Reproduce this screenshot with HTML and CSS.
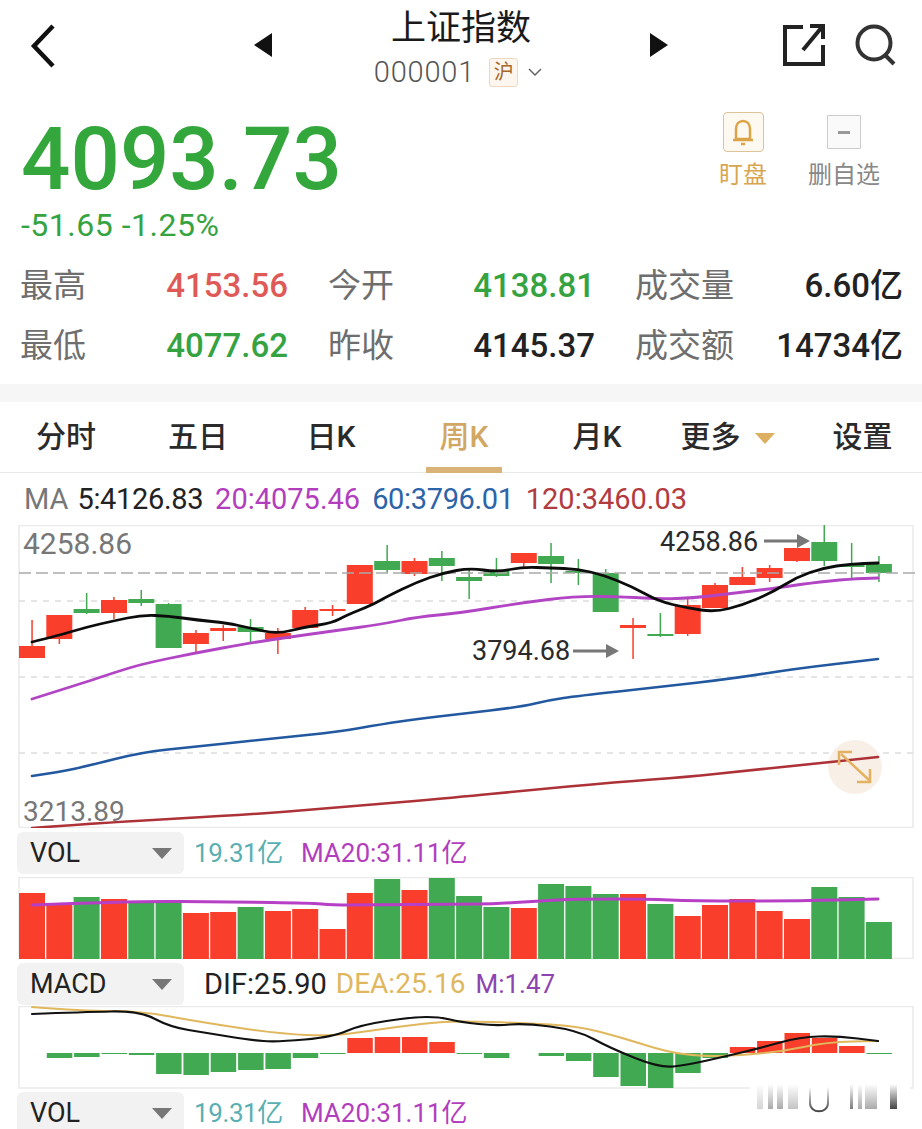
FILE: index.html
```html
<!DOCTYPE html>
<html lang="zh-CN">

<head>
    <meta charset="utf-8">
    <title>上证指数</title>
    <link rel="stylesheet" href="styles.css">
</head>

<body>
    <div class="page">
        <!-- top bar -->
        <header class="topbar">
            <svg class="back" viewBox="0 0 26 44"><polyline points="23,2 4,22 23,42" /></svg>
            <span class="nav-arrow prev"></span>
            <div class="title-block">
                <div class="title">上证指数</div>
                <div class="subtitle">
                    <span class="code">000001</span>
                    <span class="market">沪</span>
                    <svg class="caret" viewBox="0 0 14 8"><polyline points="1,1 7,7 13,1" /></svg>
                </div>
            </div>
            <span class="nav-arrow next"></span>
            <svg class="share" viewBox="0 0 42 42">
                <polyline points="20,3 2,3 2,40 40,40 40,21" />
                <polyline points="27,2 40,2 40,15" />
                <line x1="39" y1="3" x2="20" y2="26" />
            </svg>
            <svg class="search" viewBox="0 0 42 42">
                <circle cx="20" cy="19" r="16.5" />
                <line x1="31" y1="31" x2="40" y2="40" />
            </svg>
        </header>

        <!-- price and quick actions -->
        <section class="quote">
            <div class="price-block">
                <div class="price">4093.73</div>
                <div class="change">-51.65 -1.25%</div>
            </div>
            <div class="quick-actions">
                <div class="action watch">
                    <span class="action-box">
                        <svg viewBox="0 0 24 28">
                            <path d="M5 21V11C5 6 8 3 12 3s7 3 7 8v10z" />
                            <line x1="2" y1="22" x2="22" y2="22" />
                            <line x1="10" y1="26" x2="14" y2="26" />
                        </svg>
                    </span>
                    <span class="action-label">盯盘</span>
                </div>
                <div class="action remove">
                    <span class="action-box"><i class="minus"></i></span>
                    <span class="action-label">删自选</span>
                </div>
            </div>
        </section>

        <section class="stats">
            <div class="stat-row">
                <span class="stat-label">最高</span><span class="stat-value up">4153.56</span>
                <span class="stat-label">今开</span><span class="stat-value down">4138.81</span>
                <span class="stat-label">成交量</span><span class="stat-value">6.60亿</span>
            </div>
            <div class="stat-row">
                <span class="stat-label">最低</span><span class="stat-value down">4077.62</span>
                <span class="stat-label">昨收</span><span class="stat-value">4145.37</span>
                <span class="stat-label">成交额</span><span class="stat-value">14734亿</span>
            </div>
        </section>

        <div class="band"></div>

        <nav class="tabs">
            <a class="tab">分时</a>
            <a class="tab">五日</a>
            <a class="tab">日K</a>
            <a class="tab active">周K</a>
            <a class="tab">月K</a>
            <a class="tab more">更多<i class="more-caret"></i></a>
            <a class="tab">设置</a>
        </nav>

        <div class="ma-legend">
            <span class="muted">MA</span>
            <span class="tight">5:4126.83</span>
            <span class="purple">20:4075.46</span>
            <span class="blue tight">60:3796.01</span>
            <span class="brown">120:3460.03</span>
        </div>

        <!-- the svg view boxes use screen coordinates, so data reads straight off the picture -->
        <svg id="kline" class="chart" viewBox="0 525 922 303">
            <text class="axis-label high" x="23" y="554">4258.86</text>
            <text class="axis-label" x="23" y="821">3213.89</text>
            <text class="mark-label" x="660" y="551">4258.86</text>
            <polyline class="mark-arrow" points="764,541 799,541" />
            <polygon class="mark-head" points="797,534 810,541 797,548" />
            <text class="mark-label" x="472" y="660">3794.68</text>
            <polyline class="mark-arrow" points="573,651 608,651" />
            <polygon class="mark-head" points="606,644 619,651 606,658" />
            <g class="expand">
                <polyline points="839,765 839,752 852,752" />
                <line x1="841" y1="754" x2="869" y2="780" />
                <polyline points="870,769 870,782 857,782" />
            </g>
        </svg>

        <div class="panel-head">
            <div class="select">VOL<i class="select-caret"></i></div>
            <span class="teal legend-a">19.31亿</span>
            <span class="purple legend-b">MA20:31.11亿</span>
        </div>
        <svg id="volume" class="chart" viewBox="0 877 922 82"></svg>

        <div class="panel-head macd-head">
            <div class="select">MACD<i class="select-caret"></i></div>
            <span class="legend-dif">DIF:25.90</span>
            <span class="gold legend-dea">DEA:25.16</span>
            <span class="violet legend-m">M:1.47</span>
        </div>
        <svg id="macd" class="chart" viewBox="0 1006 922 83"></svg>

        <div class="panel-head last-head">
            <div class="select">VOL<i class="select-caret"></i></div>
            <span class="teal legend-a">19.31亿</span>
            <span class="purple legend-b">MA20:31.11亿</span>
        </div>

        <!-- blurred watermark over the bottom corner -->
        <svg class="watermark" viewBox="0 0 160 34">
            <defs>
                <linearGradient id="fade" x1="0" y1="0" x2="0" y2="1">
                    <stop offset="0" stop-color="#fff" />
                    <stop offset="1" stop-color="#aaa" />
                </linearGradient>
                <linearGradient id="fade-dark" x1="0" y1="0" x2="0" y2="1">
                    <stop offset="0" stop-color="#fff" />
                    <stop offset="1" stop-color="#444" />
                </linearGradient>
            </defs>
            <rect x="0" y="0" width="160" height="34" fill="#fff" />
            <rect x="7" y="3" width="6" height="25" fill="url(#fade)" opacity="0.5" />
            <rect x="18" y="3" width="5" height="25" fill="url(#fade)" />
            <rect x="27" y="3" width="6" height="25" fill="url(#fade)" />
            <rect x="38" y="3" width="10" height="25" fill="url(#fade)" opacity="0.7" />
            <path d="M60 6V22C60 33 78 33 78 22V6" fill="none" stroke="url(#fade-dark)" stroke-width="2" />
            <rect x="100" y="3" width="3" height="25" fill="url(#fade-dark)" opacity="0.7" />
            <rect x="108" y="3" width="4" height="25" fill="url(#fade)" />
            <rect x="115" y="3" width="12" height="25" fill="url(#fade)" />
            <rect x="140" y="3" width="7" height="25" fill="url(#fade-dark)" />
        </svg>
    </div>

    <script src="charts.js"></script>
</body>

</html>
```

FILE: styles.css
```css
* {
    box-sizing: border-box;
}

html, body {
    margin: 0;
    background-color: #fff;
}

body {
    font-family: Roboto, "Noto Sans CJK SC", sans-serif;
    color: #222;
}

.page {
    position: relative;
    width: 922px;
    height: 1129px;
    overflow: hidden;
}

/* top bar */
.topbar {
    display: flex;
    align-items: center;
    height: 100px;
    padding-left: 30px;
}

.back {
    width: 26px;
    height: 44px;
    margin-top: -8px;

    polyline {
        fill: none;
        stroke: #111;
        stroke-width: 4.5;
    }
}

.nav-arrow {
    width: 0;
    height: 0;
    margin-top: -10px;
    border-top: 12px solid transparent;
    border-bottom: 12px solid transparent;
}

.nav-arrow.prev {
    margin-left: 198px;
    border-right: 18px solid #111;
}

.nav-arrow.next {
    border-left: 18px solid #111;
}

.title-block {
    align-self: flex-start;
    width: 378px;
    padding-top: 7px;
    text-align: center;
}

.title {
    font-size: 35px;
    line-height: 44px;
    color: #1a1a1a;
}

.subtitle {
    display: flex;
    align-items: center;
    justify-content: center;
    gap: 14px;
    height: 36px;
    margin-top: 3px;
    margin-left: -6px;
}

.code {
    font-size: 29px;
    font-weight: 300;
    color: #555;
    letter-spacing: 0.8px;
}

.market {
    width: 29px;
    height: 29px;
    font-size: 20px;
    line-height: 27px;
    text-align: center;
    color: #a5682c;
    background-color: #fdf6ee;
    border: 1px solid #eed9c0;
    border-radius: 3px;
}

.caret {
    width: 14px;
    height: 8px;
    margin-left: -4px;

    polyline {
        fill: none;
        stroke: #666;
        stroke-width: 1.5;
    }
}

.share {
    width: 42px;
    height: 42px;
    margin-left: 115px;
    margin-top: -10px;
    fill: none;
    stroke: #222;
    stroke-width: 4;
}

.search {
    width: 42px;
    height: 42px;
    margin-left: 29px;
    margin-top: -10px;
    fill: none;
    stroke: #333;
    stroke-width: 4;
}

/* price */
.quote {
    display: flex;
    justify-content: space-between;
    height: 156px;
    padding-left: 21px;
}

.price {
    font-size: 87px;
    font-weight: 500;
    line-height: 88px;
    margin-top: 15px;
    color: #33a63c;
}

.change {
    font-size: 32px;
    line-height: 36px;
    margin-top: 4px;
    letter-spacing: 0.5px;
    color: #35a341;
}

.quick-actions {
    display: flex;
    gap: 41px;
    padding: 12px 42px 0 0;
}

.action {
    display: flex;
    flex-direction: column;
    align-items: center;
}

.action-box {
    display: flex;
    align-items: center;
    justify-content: center;
    height: 40px;
    border-radius: 4px;
}

.action-label {
    font-size: 24px;
    line-height: 30px;
    margin-top: 8px;
}

.watch {
    color: #d8a651;

    .action-box {
        width: 41px;
        background-color: #fdf8f0;
        border: 1.5px solid #dcc39a;
    }

    svg {
        width: 24px;
        height: 28px;
        fill: none;
        stroke: #dca448;
        stroke-width: 2.5;
    }
}

.remove {
    color: #888;

    .action-box {
        width: 34px;
        height: 34px;
        margin-top: 3px;
        margin-bottom: 3px;
        background-color: #fafafa;
        border: 1px solid #ccc;
        border-radius: 1px;
    }
}

.minus {
    width: 12px;
    height: 3px;
    background-color: #999;
}

/* high, low, open, close */
.stats {
    display: flex;
    flex-direction: column;
    gap: 20px;
    height: 128px;
    padding-top: 10px;
}

.stat-row {
    display: grid;
    grid-template-columns: 80px 188px 120px 187px 150px 158px;
    align-items: center;
    height: 40px;
    padding-left: 20px;
}

.stat-label {
    font-size: 33px;
    line-height: 40px;
    color: #6e6e6e;
    white-space: nowrap;
}

.stat-value {
    font-size: 33px;
    line-height: 40px;
    font-weight: 500;
    text-align: right;
    color: #222;
    white-space: nowrap;
}

.stat-value.up {
    color: #df5a57;
}

.stat-value.down {
    color: #35a341;
}

.stat-value + .stat-label {
    margin-left: 40px;
}

.band {
    height: 18px;
    background-color: #f6f6f7;
}

/* period tabs */
.tabs {
    position: relative;
    display: grid;
    grid-template-columns: 132px 132px 134px 132px 134px 139px 119px;
    height: 71px;
    border-bottom: 1.5px solid #e8e8e8;
}

.tab {
    font-size: 30px;
    line-height: 70px;
    font-weight: 500;
    text-align: center;
    color: #2a2a2a;
}

.tab.active {
    width: 76px;
    margin-left: 28px;
    color: #d2a763;
    border-bottom: 6px solid #d9b377;
    height: 71px;
}

.tab.more {
    position: relative;
    padding-right: 46px;
}

.more-caret {
    position: absolute;
    top: 31px;
    left: 91px;
    border-top: 11px solid #dcb060;
    border-left: 10px solid transparent;
    border-right: 10px solid transparent;
}

/* moving average legend */
.ma-legend {
    display: flex;
    gap: 12px;
    height: 52px;
    padding-left: 24px;
    font-size: 29px;
    line-height: 52px;
}

.muted {
    color: #777;
    margin-right: -3px;
}

.tight {
    letter-spacing: -0.35px;
}

.purple {
    color: #b23ebd;
}

.blue {
    color: #2b64a8;
}

.brown {
    color: #b23b3f;
}

.teal {
    color: #5aafb2;
}

.gold {
    color: #dfb75e;
}

.violet {
    color: #8e44b0;
}

/* charts */
.chart {
    display: block;
    width: 922px;
}

#kline {
    height: 303px;
}

#volume {
    height: 82px;
}

#macd {
    height: 83px;
}

.frame {
    fill: none;
    stroke: #eaeaea;
    stroke-width: 1.5;
}

.grid-line {
    stroke: #ddd;
    stroke-width: 1.5;
    stroke-dasharray: 6 6;
}

.grid-line.last {
    stroke: #aaa;
    stroke-dasharray: 12 5;
}

.axis-label {
    font-size: 28px;
    fill: #777;
}

.axis-label.high {
    font-size: 30px;
}

.mark-label {
    font-size: 27px;
    fill: #2a2a2a;
}

.mark-arrow {
    fill: none;
    stroke: #777;
    stroke-width: 3;
}

.mark-head {
    fill: #777;
}

.expand-bg {
    fill: #f8f0e6;
}

.expand {
    fill: none;
    stroke: #e3b160;
    stroke-width: 2.5;
}

.line {
    fill: none;
    stroke-linejoin: round;
    stroke-linecap: round;
}

/* panel headers */
.panel-head {
    display: flex;
    align-items: center;
    height: 49px;
    padding: 4px 0 3px 17px;
    font-size: 26px;
    line-height: 30px;
}

.macd-head {
    height: 47px;
    padding-bottom: 2px;
    font-size: 28px;
}

.last-head {
    height: 45px;
    padding-top: 5px;
}

.select {
    position: relative;
    flex: none;
    width: 167px;
    height: 42px;
    padding-left: 13px;
    font-size: 27px;
    line-height: 42px;
    color: #222;
    background-color: #f2f2f2;
    border-radius: 6px;
}

.select-caret {
    position: absolute;
    top: 16px;
    left: 135px;
    border-top: 11px solid #777;
    border-left: 10px solid transparent;
    border-right: 10px solid transparent;
}

.legend-a {
    margin-left: 10px;
    letter-spacing: -0.4px;
}

.legend-b {
    margin-left: 18px;
}

.legend-dif {
    margin-left: 20px;
    font-size: 29px;
}

.legend-dea {
    margin-left: 9px;
}

.legend-m {
    margin-left: 10px;
    font-size: 26px;
}

.watermark {
    position: absolute;
    left: 750px;
    top: 1081px;
    width: 160px;
    height: 34px;
    filter: blur(0.7px);
}
```

FILE: charts.js
```js
const RED = '#f93e2b';
const GREEN = '#41a952';
const STEP = 27.32;
const FIRST = 32;

const centerOf = (i) => FIRST + i * STEP;

// [color, body top, body bottom, wick top, wick bottom]
const candles = [
    ['r', 646, 658, 620, 658], ['r', 615, 639, 615, 644], ['g', 609, 613, 593, 614], ['r', 600, 613, 597, 619],
    ['g', 599, 603, 590, 606], ['g', 604, 648, 603, 648], ['r', 633, 644, 630, 654], ['r', 628, 631, 625, 641],
    ['g', 627, 632, 619, 644], ['r', 633, 639, 628, 654], ['r', 610, 628, 607, 628], ['r', 609, 610, 605, 616],
    ['r', 565, 604, 565, 604], ['g', 561, 570, 545, 573], ['r', 561, 574, 558, 576], ['g', 558, 566, 551, 581],
    ['g', 577, 581, 569, 599], ['g', 571, 576, 558, 577], ['r', 553, 563, 553, 568], ['g', 556, 564, 543, 583],
    ['g', 571, 573, 559, 585], ['g', 573, 612, 569, 612], ['r', 625, 628, 618, 659], ['g', 634, 635, 613, 637],
    ['r', 605, 634, 598, 636], ['r', 585, 608, 583, 608], ['r', 577, 585, 567, 585], ['r', 568, 578, 565, 582],
    ['r', 548, 561, 548, 562], ['g', 542, 561, 525, 566], ['g', 565, 567, 543, 579], ['g', 564, 573, 556, 582],
];

const ma5 = '32,642 60,635 87,627 113,621 142,615 168,616 197,620 227,623 250,628 277,634 305,627 332,623 347,615 372,605 388,596 417,582 443,573 470,568 497,572 523,567 550,568 578,569 603,575 633,587 658,601 687,608 715,612 743,605 773,592 797,577 823,568 850,564 878,563';
const ma20 = '32,699 83,683 113,673 142,664 195,653 250,643 290,637 333,631 383,624 417,617 460,613 520,603 577,596 627,597 660,599 693,598 727,594 777,588 810,583 850,579 878,578';
const ma60 = '32,776 60,772 87,766 143,752 193,747 277,738 337,732 383,724 417,719 460,714 520,707 550,700 577,696 660,687 737,678 793,669 878,659';
const ma120 = '32,828 113,822 243,815 333,808 460,797 520,791 617,782 687,777 743,771 793,766 878,757';

const volumeTops = [
    ['r', 893], ['r', 904], ['g', 897], ['r', 899], ['g', 901], ['g', 902], ['r', 913], ['r', 912],
    ['g', 907], ['r', 911], ['r', 909], ['r', 929], ['r', 893], ['g', 879], ['r', 890], ['g', 878],
    ['g', 896], ['g', 907], ['r', 908], ['g', 884], ['g', 886], ['g', 894], ['r', 894], ['g', 904],
    ['r', 916], ['r', 905], ['r', 899], ['r', 911], ['r', 919], ['g', 887], ['g', 897], ['g', 922],
];
const volumeMa = '32,905 127,901 233,902 310,903 333,905 367,905 460,904 493,904 537,901 577,899 647,899 693,901 793,901 878,899';

// macd bar ends, measured against the zero line at 1053
const macdBars = [
    0, 1058, 1057, 1054, 1055, 1074, 1075, 1072, 1070, 1069, 1058, 1054, 1038, 1037, 1037, 1042,
    1054, 1058, 0, 1056, 1061, 1077, 1086, 1088, 1073, 1058, 1047, 1041, 1033, 1038, 1046, 1054,
];
const dif = '32,1014 83,1012 140,1011 170,1027 207,1033 250,1040 277,1042 333,1037 360,1025 413,1017 440,1017 460,1022 497,1026 523,1023 577,1030 610,1048 660,1068 687,1065 727,1056 760,1048 800,1037 837,1036 878,1041';
const dea = '32,1007 83,1011 140,1011 200,1022 280,1034 333,1036 367,1031 427,1023 460,1021 523,1023 577,1026 620,1037 667,1052 700,1056 727,1056 780,1052 827,1042 878,1041';

// round the corners off: curve through the midpoints of the measured points
const line = (points, color, width) => {
    const pts = points.split(' ').map(p => p.split(',').map(Number));
    let d = `M${pts[0]}`;
    for (let i = 1; i < pts.length - 1; i++) {
        const midX = (pts[i][0] + pts[i + 1][0]) / 2;
        const midY = (pts[i][1] + pts[i + 1][1]) / 2;
        d += `Q${pts[i]} ${midX},${midY}`;
    }
    d += `L${pts[pts.length - 1]}`;
    return `<path class="line" d="${d}" stroke="${color}" stroke-width="${width}" />`;
};

const rect = (x, y, w, h, color) =>
    `<rect x="${x.toFixed(1)}" y="${y}" width="${w}" height="${h}" fill="${color}" />`;

const colorOf = (c) => (c === 'r' ? RED : GREEN);

const drawKline = () => {
    let back = '<rect class="frame" x="19" y="525.5" width="894" height="302" />';
    [601, 677, 753].forEach(y => {
        back += `<line class="grid-line" x1="19" y1="${y}" x2="913" y2="${y}" />`;
    });
    back += '<circle class="expand-bg" cx="855" cy="767" r="27" />';

    candles.forEach(([c, top, bottom, wickTop, wickBottom], i) => {
        const x = centerOf(i);
        back += rect(x - 0.75, wickTop, 1.5, wickBottom - wickTop, colorOf(c));
        back += rect(x - 13, top, 26, Math.max(bottom - top, 2), colorOf(c));
    });

    back += '<line class="grid-line last" x1="19" y1="573" x2="920" y2="573" />';
    back += line(ma120, '#ad3238', 2.6);
    back += line(ma60, '#22589f', 2.6);
    back += line(ma20, '#b245c4', 2.8);
    back += line(ma5, '#0c0c0c', 2.8);
    document.querySelector('#kline').insertAdjacentHTML('afterbegin', back);
};

const drawVolume = () => {
    let content = '<rect class="frame" x="19" y="877.5" width="894" height="81" />';
    volumeTops.forEach(([c, top], i) => {
        content += rect(centerOf(i) - 13, top, 26, 959 - top, colorOf(c));
    });
    content += line(volumeMa, '#b63fc6', 3);
    document.querySelector('#volume').innerHTML = content;
};

const drawMacd = () => {
    let content = '<rect class="frame" x="19" y="1006.5" width="894" height="81.5" />';
    macdBars.forEach((end, i) => {
        if (!end) return;
        const top = Math.min(end, 1053);
        content += rect(centerOf(i) - 12.5, top, 25.5, Math.abs(end - 1053), end < 1053 ? RED : GREEN);
    });
    content += line(dea, '#e0b75c', 2);
    content += line(dif, '#111', 2.2);
    document.querySelector('#macd').innerHTML = content;
};

drawKline();
drawVolume();
drawMacd();
```
